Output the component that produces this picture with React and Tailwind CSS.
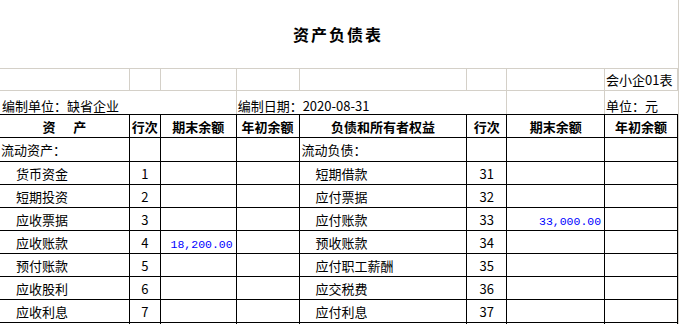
import React from 'react';

const widths = ['w-[130px]', 'w-[31px]', 'w-[76px]', 'w-[63px]', 'w-[168px]', 'w-[40px]', 'w-[98px]', 'w-[73px]'];

const rows = [
  { left: '流动资产：', right: '流动负债：', group: true },
  { left: '货币资金', ln: '1', right: '短期借款', rn: '31' },
  { left: '短期投资', ln: '2', right: '应付票据', rn: '32' },
  { left: '应收票据', ln: '3', right: '应付账款', rn: '33', rv: '33,000.00' },
  { left: '应收账款', ln: '4', lv: '18,200.00', right: '预收账款', rn: '34' },
  { left: '预付账款', ln: '5', right: '应付职工薪酬', rn: '35' },
  { left: '应收股利', ln: '6', right: '应交税费', rn: '36' },
  { left: '应收利息', ln: '7', right: '应付利息', rn: '37' },
  {},
];

const Amount = ({ v }) => (
  <span className="self-end pr-[3px] pb-[1px] text-[#0000ff] text-[11.5px] leading-[14px] font-['Liberation_Mono',monospace]">{v}</span>
);

export default function App() {
  return (
    <div className="w-[679px] bg-white text-black text-[13px] font-['Noto_Sans_CJK_SC','Liberation_Sans',sans-serif] border-r border-[#d4d0c8] h-[324px] overflow-hidden">
      {/* title */}
      <div className="h-[68px] flex items-center justify-center">
        <h1 className="text-[16px] font-bold tracking-[2px] pr-[2px] leading-none">资产负债表</h1>
      </div>

      {/* gray row 1 */}
      <div className="flex h-[23px] border-y border-[#d4d0c8]">
        {widths.map((w, i) => (
          <div key={i} className={`${w} border-r border-[#d4d0c8] flex items-center pl-[1px] leading-none`}>
            {i === 7 ? '会小企01表' : ''}
          </div>
        ))}
      </div>

      {/* gray row 2 */}
      <div className="flex h-[24px] border-b border-black">
        <div className="w-[237px] border-r border-[#d4d0c8] flex items-end pl-[2px] pb-[2px] leading-none">编制单位：缺省企业</div>
        <div className="w-[271px] border-r border-[#d4d0c8] flex items-end pl-[1px] pb-[2px] leading-none">编制日期：2020-08-31</div>
        <div className="w-[98px] border-r border-[#d4d0c8]"></div>
        <div className="w-[73px] flex items-end pl-[1px] pb-[2px] leading-none">单位：元</div>
      </div>

      {/* header */}
      <div className="flex h-[23px] border-b border-black font-bold leading-none">
        <div className={`${widths[0]} border-r border-black flex items-center justify-center whitespace-pre`}>资      产</div>
        <div className={`${widths[1]} border-r border-black flex items-center justify-center`}>行次</div>
        <div className={`${widths[2]} border-r border-black flex items-center justify-center`}>期末余额</div>
        <div className={`${widths[3]} border-r border-black flex items-center justify-center`}>年初余额</div>
        <div className={`${widths[4]} border-r border-black flex items-center justify-center`}>负债和所有者权益</div>
        <div className={`${widths[5]} border-r border-black flex items-center justify-center`}>行次</div>
        <div className={`${widths[6]} border-r border-black flex items-center justify-center`}>期末余额</div>
        <div className={`${widths[7]} border-r border-black flex items-center justify-center`}>年初余额</div>
      </div>

      {rows.map((r, idx) => (
        <div key={idx} className={`flex border-b border-black leading-none ${idx === 0 ? 'h-[24px]' : 'h-[23px]'}`}>
          <div className={`${widths[0]} border-r border-black flex items-center ${r.group ? 'pl-[1px]' : 'pl-[16px]'}`}>{r.left}</div>
          <div className={`${widths[1]} border-r border-black flex items-center justify-center`}>{r.ln}</div>
          <div className={`${widths[2]} border-r border-black flex justify-end`}>{r.lv && <Amount v={r.lv} />}</div>
          <div className={`${widths[3]} border-r border-black`}></div>
          <div className={`${widths[4]} border-r border-black flex items-center ${r.group ? 'pl-[2px]' : 'pl-[16px]'}`}>{r.right}</div>
          <div className={`${widths[5]} border-r border-black flex items-center justify-center`}>{r.rn}</div>
          <div className={`${widths[6]} border-r border-black flex justify-end`}>{r.rv && <Amount v={r.rv} />}</div>
          <div className={`${widths[7]} border-r border-black`}></div>
        </div>
      ))}
    </div>
  );
}
